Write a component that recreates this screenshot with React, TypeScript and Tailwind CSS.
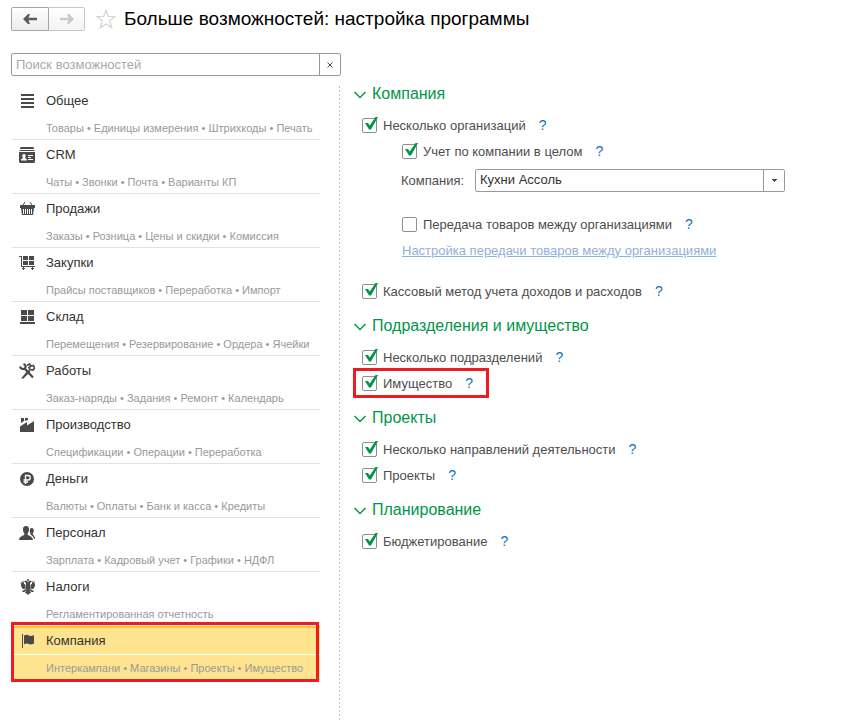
import React, { useState } from "react";

type MenuItem = {
    id: string;
    title: string;
    hints: string[];
    icon: React.ReactNode;
};

const menu: MenuItem[] = [
    {
        id: "general",
        title: "Общее",
        hints: ["Товары", "Единицы измерения", "Штрихкоды", "Печать"],
        icon: <path d="M2 1h13v2H2zM2 5h13v2H2zM2 9h13v2H2zM2 13h13v2H2z" />,
    },
    {
        id: "crm",
        title: "CRM",
        hints: ["Чаты", "Звонки", "Почта", "Варианты КП"],
        icon: (
            <>
                <path d="M2 0h12l1 1v1H1V1zM1 3h14l1 1H0z" />
                <path
                    fillRule="evenodd"
                    d="M0 5h16v10l-1 1H1l-1-1zM5 7a1.700 1.700 0 0 0-1.700 2c0 1 .5 1.700 1 2C3 11.400 2 12 2 13.500h6c0-1.500-1-2.100-2.300-2.500.5-.3 1-1 1-2A1.700 1.700 0 0 0 5 7zM9 8v1h5V8zM9 10v1h3v-1zM9 12v1h5v-1z"
                />
            </>
        ),
    },
    {
        id: "sales",
        title: "Продажи",
        hints: ["Заказы", "Розница", "Цены и скидки", "Комиссия"],
        icon: (
            <>
                <path d="M6 1 4 4M11 1l2 3" stroke="currentColor" fill="none" />
                <path
                    fillRule="evenodd"
                    d="M1 4h15v3H1zM2 7h13l-1 7H3zM4 8v5h1V8zM6 8v5h1V8zM8 8v5h1V8zM10 8v5h1V8zM12 8v5h1V8z"
                />
            </>
        ),
    },
    {
        id: "purchases",
        title: "Закупки",
        hints: ["Прайсы поставщиков", "Переработка", "Импорт"],
        icon: (
            <path d="M0 1h3v10h13v1H2V2H0zM4 1h5v4H4zM10 1h5v4h-5zM4 6h5v4H4zM10 6h5v4h-5zM4 12h1v1h1v1H5v1H4v-1H3v-1h1zM13 12h1v1h1v1h-1v1h-1v-1h-1v-1h1z" />
        ),
    },
    {
        id: "stock",
        title: "Склад",
        hints: ["Перемещения", "Резервирование", "Ордера", "Ячейки"],
        icon: (
            <path d="M2 1h6v5H2zM9 1h6v5H9zM2 7h6v5H2zM9 7h6v5H9zM1 13h15v2H1z" />
        ),
    },
    {
        id: "works",
        title: "Работы",
        hints: ["Заказ-наряды", "Задания", "Ремонт", "Календарь"],
        icon: (
            <>
                <path
                    d="M1 3.500C1.500 6 4 6.500 6 5.500c1.200-1.500.5-4-1.500-4.500M5.500 5.500l8.500 9"
                    fill="none"
                    stroke="currentColor"
                    strokeWidth="2.200"
                />
                <path
                    d="M8 2.500 10.500 1 12 3M12 3l2.500-.5 1 2.500-1.500 2-3-.5L10 4.500z"
                    fill="none"
                    stroke="currentColor"
                    strokeWidth="1.700"
                />
                <path d="m9.500 6.500 2 2-7 7H2z" />
            </>
        ),
    },
    {
        id: "production",
        title: "Производство",
        hints: ["Спецификации", "Операции", "Переработка"],
        icon: (
            <path d="M1 9.500 8 5v3.500L15 4v11H1zM2 1h3v3L2 6zM6 1h3v2L6 4z" />
        ),
    },
    {
        id: "money",
        title: "Деньги",
        hints: ["Валюты", "Оплаты", "Банк и касса", "Кредиты"],
        icon: (
            <>
                <circle cx="8" cy="8" r="7" />
                <path
                    d="M6.500 13V4.500H9a2.200 2.200 0 0 1 0 4.500H4.500M4.500 11H9"
                    fill="none"
                    stroke="#fff"
                    strokeWidth="1.300"
                />
            </>
        ),
    },
    {
        id: "staff",
        title: "Персонал",
        hints: ["Зарплата", "Кадровый учет", "Графики", "НДФЛ"],
        icon: (
            <>
                <path d="M7 1c2.300 0 3.300 1.600 3 4-.2 1.700-.9 2.600-1.300 3.300V10c1.500.8 4.800 1.300 5.300 5H0c.3-3.700 3.800-4.200 5.300-5V8.300C4.700 7.600 4.200 6.700 4 5c-.3-2.400.7-4 3-4z" />
                <path d="M12.500 3c1.800 0 2.500 1.200 2.300 3-.1 1.200-.6 1.800-1 2.500v1c1 .8 2 1.500 2.200 4.500h-1c-.4-2-1.600-3.400-3.400-4.200V8.500c-.6-.7-1-1.300-.8-2.500.1-1.800.4-3 1.700-3z" />
            </>
        ),
    },
    {
        id: "taxes",
        title: "Налоги",
        hints: ["Регламентированная отчетность"],
        icon: (
            <>
                <path d="M8.300 0h1.400v2H8.300zM7 5 6.700 3.400 5 2.800l1.500-1.300L8.200 2l.8 1.500.8-1.500 1.700-.5L13 2.800l-1.700.6L11 5l.5 5L9 12l-2.500-2z" />
                <path d="M6.300 5.500 5 5l-.5-3.500-.7 2-1.300-2 .2 3-1.200-1 .8 3-.5.2L3 8.500l-.2.7L4.500 10l2-.5zM11.700 5.500 13 5l.5-3.500.7 2 1.300-2-.2 3 1.200-1-.8 3 .5.2L15 8.500l.2.7-1.700.8-2-.5z" />
                <path d="M7.500 11h3l1.500 3-1.500.5L9 16l-1.500-1.500L6 14zM6.800 10 4 11.500 3 13h2.500l2-2zM11.200 10l2.800 1.500 1 1.500h-2.500l-2-2z" />
            </>
        ),
    },
    {
        id: "company",
        title: "Компания",
        hints: ["Интеркампани", "Магазины", "Проекты", "Имущество"],
        icon: (
            <path d="M3 1h1v14H3zM5 2.500c2.500-1.300 4-.8 5 0 1 .7 2.500.8 5-.5v8.500c-2.500 1.200-4 1.200-5.300.5-1.200-.7-2.700-.8-4.700.3z" />
        ),
    },
];

function Help() {
    return (
        <button type="button" aria-label="Справка" className="ml-[13px] text-sm text-[#0a74c0]">
            ?
        </button>
    );
}

type OptionProps = {
    label: string;
    defaultChecked?: boolean;
    nested?: boolean;
    marked?: boolean;
};

function Option({ label, defaultChecked = false, nested, marked }: OptionProps) {
    const [checked, setChecked] = useState(defaultChecked);

    return (
        <div className={`flex h-[26px] items-center ${nested ? "pl-[62px]" : "pl-[22px]"}`}>
            <div className="relative flex h-5 items-center">
                <label className="flex items-center gap-1.5">
                    <span className="relative flex">
                        <input
                            type="checkbox"
                            checked={checked}
                            onChange={(e) => setChecked(e.target.checked)}
                            className="size-[15px] appearance-none rounded-xs border border-[#8f8f8f] bg-white"
                        />
                        {checked && (
                            <svg
                                viewBox="0 0 16 16"
                                className="pointer-events-none absolute -top-px left-0 size-4"
                                fill="#009646">
                                <path d="M3 6h3l1.800 2.600L13.500 0H16L9 12.500H7z" />
                            </svg>
                        )}
                    </span>
                    <span className="pt-0.5">{label}</span>
                </label>
                <Help />
                {marked && (
                    <span className="pointer-events-none absolute -inset-y-[5px] -left-[9px] -right-4 border-3 border-[#ed1c24]" />
                )}
            </div>
        </div>
    );
}

type SectionProps = {
    title: string;
    children: React.ReactNode;
};

function Section({ title, children }: SectionProps) {
    const [open, setOpen] = useState(true);

    return (
        <section className="mb-2">
            <h2 className="mb-1.5 text-base text-[#009646]">
                <button
                    type="button"
                    aria-expanded={open}
                    onClick={() => setOpen(!open)}
                    className="flex h-[26px] items-center gap-1.5 pl-3.5">
                    <svg
                        viewBox="0 0 12 8"
                        className={`mt-1 h-2 w-3 ${open ? "" : "-rotate-90"}`}
                        fill="none"
                        stroke="currentColor"
                        strokeWidth="1.400">
                        <path d="m.5 1 5.500 5.500L11.500 1" />
                    </svg>
                    <span className="pt-0.5">{title}</span>
                </button>
            </h2>
            {open && children}
        </section>
    );
}

export default function App() {
    const [search, setSearch] = useState("");
    const [active, setActive] = useState("company");

    return (
        <div className="flex min-h-screen flex-col bg-white px-[11px] pb-0.5 pt-[7px] font-['Liberation_Sans',Arial,sans-serif] text-[13px] text-[#4d4d4d]">
            <header className="flex h-6 items-center">
                <div className="flex">
                    <button
                        type="button"
                        aria-label="Назад"
                        className="flex h-6 w-[38px] items-center justify-center rounded-l-xs border border-[#a6a6a6] bg-linear-to-b from-white to-[#ececec] text-[#5c5c5c]">
                        <svg viewBox="0 0 14 10" className="h-2.5 w-3.5" fill="currentColor">
                            <path d="M0 5 5 0h2L5.500 3.700H14v2.600H5.500L7 10H5z" />
                        </svg>
                    </button>
                    <button
                        type="button"
                        aria-label="Вперед"
                        className="flex h-6 w-9 items-center justify-center rounded-r-xs border border-l-0 border-[#c8c8c8] bg-linear-to-b from-white to-[#f3f3f3] text-[#c9c9c9]">
                        <svg viewBox="0 0 14 10" className="h-2.5 w-3.5" fill="currentColor">
                            <path d="M14 5 9 0H7l1.500 3.700H0v2.600h8.500L7 10h2z" />
                        </svg>
                    </button>
                </div>
                <button type="button" aria-label="В избранное" className="ml-[11px] mr-2">
                    <svg
                        viewBox="0 0 20 20"
                        className="size-5"
                        fill="none"
                        stroke="#d4d4d4"
                        strokeWidth="1.200">
                        <path d="m10 1 2.300 6.500H19l-5.300 4.300 2 7L10 15l-5.700 3.800 2-7L1 7.500h6.700z" />
                    </svg>
                </button>
                <h1 className="text-[19px] text-black">Больше возможностей: настройка программы</h1>
            </header>

            <div className="mt-[22px] flex h-[23px] w-[330px] rounded-xs border border-[#9a9a9a]">
                <input
                    type="text"
                    aria-label="Поиск возможностей"
                    placeholder="Поиск возможностей"
                    value={search}
                    onChange={(e) => setSearch(e.target.value)}
                    className="min-w-0 flex-1 px-1 outline-none placeholder:text-[#a9a9a9]"
                />
                <button
                    type="button"
                    aria-label="Очистить"
                    onClick={() => setSearch("")}
                    className="flex w-[21px] items-center justify-center border-l border-[#9a9a9a]">
                    <svg viewBox="0 0 6 6" className="size-1.5" stroke="#4d4d4d">
                        <path d="m.5.5 5 5M5.500.5l-5 5" />
                    </svg>
                </button>
            </div>

            <div className="flex flex-1">
                <div className="flex w-[329px] shrink-0 pl-px pt-2.5">
                    <nav className="flex-1">
                        {menu.map((item) => {
                            const current = item.id === active;
                            return (
                                <button
                                    key={item.id}
                                    type="button"
                                    aria-current={current ? "page" : undefined}
                                    onClick={() => setActive(item.id)}
                                    className={`relative block h-[54px] w-full border-b text-left ${
                                        current
                                            ? "border-[#fcc521] bg-[#ffe48f] shadow-[inset_0_2px_0_#fcc521]"
                                            : "border-[#e2e2e2]"
                                    }`}>
                                    <span
                                        className={`flex h-[29px] items-center gap-[11px] border-b pl-[7px] pt-0.5 text-[#333] ${
                                            current ? "border-white" : "border-transparent"
                                        }`}>
                                        <svg
                                            viewBox="0 0 16 16"
                                            className="size-4 text-[#4a4a4a]"
                                            fill="currentColor">
                                            {item.icon}
                                        </svg>
                                        {item.title}
                                    </span>
                                    <span className="flex h-6 items-center whitespace-nowrap pl-[34px] pt-0.5 text-[11px] text-[#999]">
                                        {item.hints.join(" • ")}
                                    </span>
                                    {current && (
                                        <span className="pointer-events-none absolute -bottom-[3px] -left-px -top-1 right-px border-3 border-[#ed1c24]" />
                                    )}
                                </button>
                            );
                        })}
                    </nav>
                    <div className="ml-[19px] w-px bg-[repeating-linear-gradient(#bdbdbd_0_2px,transparent_2px_4px)]" />
                </div>

                <main className="min-w-0 flex-1 pt-1">
                    <Section title="Компания">
                        <Option label="Несколько организаций" defaultChecked />
                        <Option label="Учет по компании в целом" defaultChecked nested />
                        <div className="mb-[15px] flex h-8 items-center pl-[61px]">
                            <label htmlFor="company" className="w-[74px] pt-0.5">
                                Компания:
                            </label>
                            <div className="relative flex w-[310px]">
                                <select
                                    id="company"
                                    className="h-[23px] w-full appearance-none rounded-xs border border-[#9a9a9a] bg-white px-1 text-[#333]">
                                    <option>Кухни Ассоль</option>
                                </select>
                                <span className="pointer-events-none absolute inset-y-0 right-0 flex w-[22px] items-center justify-center border-l border-[#9a9a9a]">
                                    <svg viewBox="0 0 5 3" className="h-[3px] w-[5px]" fill="#4d4d4d">
                                        <path d="M0 0h5v1H4v1H3v1H2V2H1V1H0z" />
                                    </svg>
                                </span>
                            </div>
                        </div>
                        <Option label="Передача товаров между организациями" nested />
                        <div className="mb-[15px] flex h-[26px] items-center pl-[62px]">
                            <a href="#transfer" className="pt-0.5 text-[#91afda] underline">
                                Настройка передачи товаров между организациями
                            </a>
                        </div>
                        <Option label="Кассовый метод учета доходов и расходов" defaultChecked />
                    </Section>

                    <Section title="Подразделения и имущество">
                        <Option label="Несколько подразделений" defaultChecked />
                        <Option label="Имущество" defaultChecked marked />
                    </Section>

                    <Section title="Проекты">
                        <Option label="Несколько направлений деятельности" defaultChecked />
                        <Option label="Проекты" defaultChecked />
                    </Section>

                    <Section title="Планирование">
                        <Option label="Бюджетирование" defaultChecked />
                    </Section>
                </main>
            </div>
        </div>
    );
}
